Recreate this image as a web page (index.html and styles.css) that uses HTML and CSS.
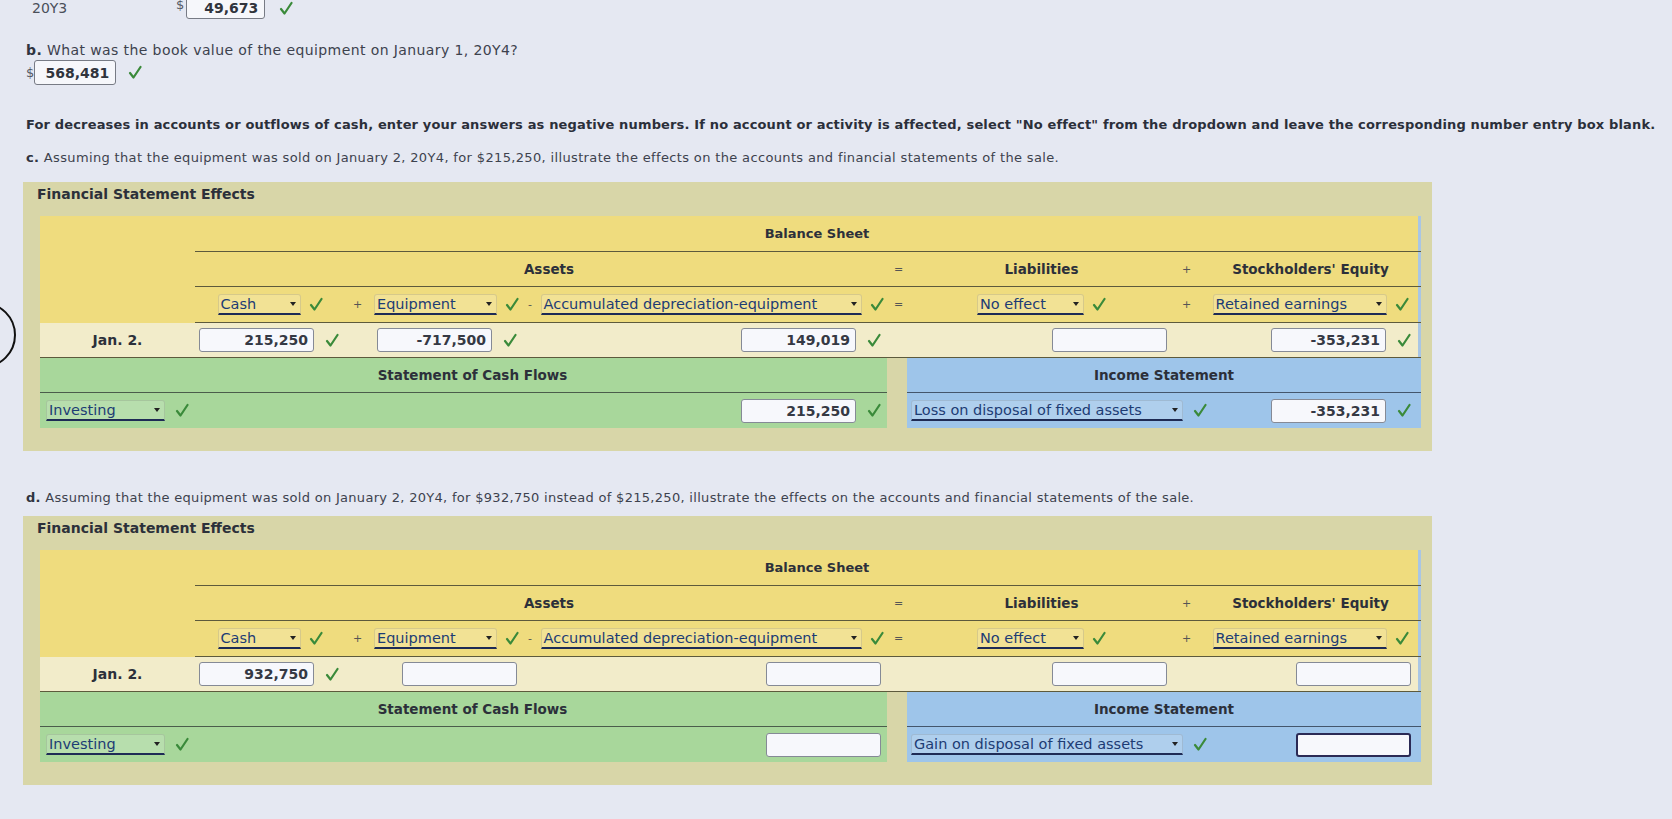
FILE: index.html
```html
<!DOCTYPE html>
<html lang="en">
<head>
<meta charset="utf-8">
<title>Financial Statement Effects</title>
<link rel="stylesheet" href="styles.css">
</head>
<body>
<div class="circle"></div>
<div class="page">
  <div class="top-row">
    <span class="yr">20Y3</span>
    <span class="dollar">$</span>
    <span class="ans w-top">49,673</span>
    <svg class="ck" viewBox="0 0 14 14"><path d="M2 7.5 L5.5 12 L12.5 1.5"/></svg>
  </div>
  <p class="q q-b"><b>b.</b> What was the book value of the equipment on January 1, 20Y4?</p>
  <div class="ans-row">
    <span class="dollar">$</span>
    <span class="ans w-b">568,481</span>
    <svg class="ck" viewBox="0 0 14 14"><path d="M2 7.5 L5.5 12 L12.5 1.5"/></svg>
  </div>
  <p class="note">For decreases in accounts or outflows of cash, enter your answers as negative numbers. If no account or activity is affected, select "No effect" from the dropdown and leave the corresponding number entry box blank.</p>
  <p class="q q-c"><b>c.</b> Assuming that the equipment was sold on January 2, 20Y4, for $215,250, illustrate the effects on the accounts and financial statements of the sale.</p>

  <section class="panel p1">
    <h2 class="ptitle">Financial Statement Effects</h2>
    <div class="tbl">
      <div class="bs grid">
        <div class="c-label"></div>
        <div class="c-bstitle">Balance Sheet</div>
        <div class="c-assets hdr">Assets</div>
        <div class="c-op hdr">=</div>
        <div class="c-liab hdr">Liabilities</div>
        <div class="c-op hdr">+</div>
        <div class="c-eq hdr">Stockholders' Equity</div>

        <div class="cell sel-cell"><span class="sel w-cash">Cash</span><svg class="ck" viewBox="0 0 14 14"><path d="M2 7.5 L5.5 12 L12.5 1.5"/></svg></div>
        <div class="c-op sel-row">+</div>
        <div class="cell sel-cell"><span class="sel w-equip">Equipment</span><svg class="ck" viewBox="0 0 14 14"><path d="M2 7.5 L5.5 12 L12.5 1.5"/></svg></div>
        <div class="c-op sel-row">-</div>
        <div class="cell sel-cell"><span class="sel w-accum">Accumulated depreciation-equipment</span><svg class="ck" viewBox="0 0 14 14"><path d="M2 7.5 L5.5 12 L12.5 1.5"/></svg></div>
        <div class="c-op sel-row">=</div>
        <div class="cell sel-cell"><span class="sel w-liab">No effect</span><svg class="ck" viewBox="0 0 14 14"><path d="M2 7.5 L5.5 12 L12.5 1.5"/></svg></div>
        <div class="c-op sel-row">+</div>
        <div class="cell sel-cell"><span class="sel w-re">Retained earnings</span><svg class="ck" viewBox="0 0 14 14"><path d="M2 7.5 L5.5 12 L12.5 1.5"/></svg></div>
      </div>
      <div class="jan grid">
        <div class="c-date">Jan. 2.</div>
        <div class="cell inp-cell"><span class="inp">215,250</span><svg class="ck" viewBox="0 0 14 14"><path d="M2 7.5 L5.5 12 L12.5 1.5"/></svg></div>
        <div></div>
        <div class="cell inp-cell"><span class="inp">-717,500</span><svg class="ck" viewBox="0 0 14 14"><path d="M2 7.5 L5.5 12 L12.5 1.5"/></svg></div>
        <div></div>
        <div class="cell inp-cell"><span class="inp">149,019</span><svg class="ck" viewBox="0 0 14 14"><path d="M2 7.5 L5.5 12 L12.5 1.5"/></svg></div>
        <div></div>
        <div class="cell inp-cell"><span class="inp"></span></div>
        <div></div>
        <div class="cell inp-cell re"><span class="inp">-353,231</span><svg class="ck" viewBox="0 0 14 14"><path d="M2 7.5 L5.5 12 L12.5 1.5"/></svg></div>
      </div>
      <div class="bottom grid">
        <div class="scf">
          <div class="sub-hdr">Statement of Cash Flows</div>
          <div class="sub-row">
            <span class="sel w-inv">Investing</span><svg class="ck" viewBox="0 0 14 14"><path d="M2 7.5 L5.5 12 L12.5 1.5"/></svg>
            <span class="spacer"></span>
            <span class="inp">215,250</span><svg class="ck" viewBox="0 0 14 14"><path d="M2 7.5 L5.5 12 L12.5 1.5"/></svg>
          </div>
        </div>
        <div class="is">
          <div class="sub-hdr">Income Statement</div>
          <div class="sub-row">
            <span class="sel w-loss">Loss on disposal of fixed assets</span><svg class="ck" viewBox="0 0 14 14"><path d="M2 7.5 L5.5 12 L12.5 1.5"/></svg>
            <span class="spacer"></span>
            <span class="inp">-353,231</span><svg class="ck" viewBox="0 0 14 14"><path d="M2 7.5 L5.5 12 L12.5 1.5"/></svg>
          </div>
        </div>
      </div>
    </div>
  </section>

  <p class="q q-d"><b>d.</b> Assuming that the equipment was sold on January 2, 20Y4, for $932,750 instead of $215,250, illustrate the effects on the accounts and financial statements of the sale.</p>

  <section class="panel p2">
    <h2 class="ptitle">Financial Statement Effects</h2>
    <div class="tbl">
      <div class="bs grid">
        <div class="c-label"></div>
        <div class="c-bstitle">Balance Sheet</div>
        <div class="c-assets hdr">Assets</div>
        <div class="c-op hdr">=</div>
        <div class="c-liab hdr">Liabilities</div>
        <div class="c-op hdr">+</div>
        <div class="c-eq hdr">Stockholders' Equity</div>

        <div class="cell sel-cell"><span class="sel w-cash">Cash</span><svg class="ck" viewBox="0 0 14 14"><path d="M2 7.5 L5.5 12 L12.5 1.5"/></svg></div>
        <div class="c-op sel-row">+</div>
        <div class="cell sel-cell"><span class="sel w-equip">Equipment</span><svg class="ck" viewBox="0 0 14 14"><path d="M2 7.5 L5.5 12 L12.5 1.5"/></svg></div>
        <div class="c-op sel-row">-</div>
        <div class="cell sel-cell"><span class="sel w-accum">Accumulated depreciation-equipment</span><svg class="ck" viewBox="0 0 14 14"><path d="M2 7.5 L5.5 12 L12.5 1.5"/></svg></div>
        <div class="c-op sel-row">=</div>
        <div class="cell sel-cell"><span class="sel w-liab">No effect</span><svg class="ck" viewBox="0 0 14 14"><path d="M2 7.5 L5.5 12 L12.5 1.5"/></svg></div>
        <div class="c-op sel-row">+</div>
        <div class="cell sel-cell"><span class="sel w-re">Retained earnings</span><svg class="ck" viewBox="0 0 14 14"><path d="M2 7.5 L5.5 12 L12.5 1.5"/></svg></div>
      </div>
      <div class="jan grid">
        <div class="c-date">Jan. 2.</div>
        <div class="cell inp-cell"><span class="inp">932,750</span><svg class="ck" viewBox="0 0 14 14"><path d="M2 7.5 L5.5 12 L12.5 1.5"/></svg></div>
        <div></div>
        <div class="cell inp-cell"><span class="inp"></span></div>
        <div></div>
        <div class="cell inp-cell"><span class="inp"></span></div>
        <div></div>
        <div class="cell inp-cell"><span class="inp"></span></div>
        <div></div>
        <div class="cell inp-cell re"><span class="inp"></span></div>
      </div>
      <div class="bottom grid">
        <div class="scf">
          <div class="sub-hdr">Statement of Cash Flows</div>
          <div class="sub-row">
            <span class="sel w-inv">Investing</span><svg class="ck" viewBox="0 0 14 14"><path d="M2 7.5 L5.5 12 L12.5 1.5"/></svg>
            <span class="spacer"></span>
            <span class="inp"></span>
          </div>
        </div>
        <div class="is">
          <div class="sub-hdr">Income Statement</div>
          <div class="sub-row">
            <span class="sel w-loss">Gain on disposal of fixed assets</span><svg class="ck" viewBox="0 0 14 14"><path d="M2 7.5 L5.5 12 L12.5 1.5"/></svg>
            <span class="spacer"></span>
            <span class="inp focus"></span>
          </div>
        </div>
      </div>
    </div>
  </section>
</div>
</body>
</html>
```

FILE: styles.css
```css
* { box-sizing: border-box; }

body {
  margin: 0;
  background: #e5e8f2;
  font-family: "DejaVu Sans", Verdana, sans-serif;
  font-size: 13px;
  color: #3a3f4b;
  overflow: hidden;
}

.page {
  padding-left: 26px;
}

.circle {
  position: absolute;
  left: -50px;
  top: 302px;
  width: 66px;
  height: 66px;
  border: 2px solid #111;
  border-radius: 50%;
}

/* answer rows */
.top-row {
  display: flex;
  align-items: center;
  height: 22px;
  margin-top: -3px;
}
.yr {
  margin-left: 6px;
  width: 144px;
  font-size: 14px;
  color: #4a4f5a;
}
.dollar {
  color: #555a66;
  font-size: 13px;
  align-self: flex-start;
  margin-right: 2px;
}
.ans {
  display: inline-flex;
  align-items: center;
  justify-content: flex-end;
  height: 22px;
  padding-right: 6px;
  background: #f6f7fb;
  border: 1px solid #777b85;
  border-radius: 3px;
  font-weight: bold;
  font-size: 14px;
  color: #30343d;
}
.w-top { width: 79px; }
.w-b { width: 82px; height: 25px; }

.ck {
  width: 14px;
  height: 15px;
  flex: none;
  margin-left: 12px;
}
.ck path {
  fill: none;
  stroke: #3a8a3a;
  stroke-width: 2.2;
  stroke-linecap: round;
  stroke-linejoin: round;
}
.top-row .ck { margin-left: 14px; }
.ans-row .ck { margin-left: 12px; }

.q {
  margin: 0;
  line-height: 16px;
  white-space: nowrap;
  color: #3d424e;
}
.q b { color: #2f3440; }
.q-b { margin-top: 23px; font-size: 14px; letter-spacing: 0.4px; }
.q-c { margin-top: 17px; font-size: 13px; letter-spacing: 0.35px; }
.q-d { margin-top: 39px; font-size: 13px; letter-spacing: 0.3px; }

.ans-row {
  display: flex;
  align-items: center;
  height: 25px;
  margin-top: 2px;
}
.ans-row .dollar { margin-right: 0; align-self: center; }

.note {
  margin: 32px 0 0;
  line-height: 16px;
  font-weight: bold;
  white-space: nowrap;
  color: #2b2f3a;
  letter-spacing: 0.15px;
}

/* panels */
.panel {
  margin-left: -3px;
  width: 1409px;
  height: 269px;
  background: #d8d6a8;
  padding: 3px 11px 0 17px;
}
.p1 { margin-top: 16px; }
.p2 { margin-top: 10px; }

.ptitle {
  margin: 0 0 13px -3px;
  font-size: 14px;
  line-height: 18px;
  color: #2c303a;
}

.tbl {
  width: 1381px;
  color: #2c303a;
}

.grid {
  display: grid;
  grid-template-columns: 155px 150px 25px 153px 14px 350px 23px 263px 27px 221px;
}

.bs {
  background: #efdc7e;
  grid-template-rows: 36px 35px 36px;
  box-shadow: inset -3px 0 0 #a9c6e4;
}
.c-label { grid-row: 1 / 4; }
.c-bstitle {
  grid-column: 2 / 11;
  border-bottom: 1px solid #5d5a3c;
  display: flex;
  align-items: center;
  justify-content: center;
  font-weight: bold;
  font-size: 13px;
  padding-left: 18px;
}
.hdr {
  display: flex;
  align-items: center;
  justify-content: center;
  font-weight: bold;
  font-size: 13.5px;
  border-bottom: 1px solid #5d5a3c;
}
.c-assets { grid-column: 2 / 7; padding-left: 16px; }
.c-op {
  font-weight: normal;
  font-size: 11px;
  color: #555;
  display: flex;
  align-items: center;
  justify-content: center;
}
.c-op.hdr { font-weight: normal; font-size: 11px; }
.sel-row { border-bottom: 1px solid #5d5a3c; }
.cell {
  display: flex;
  align-items: center;
}
.sel-cell {
  justify-content: center;
  border-bottom: 1px solid #5d5a3c;
}
.sel-cell .ck { margin-left: 8px; }

.sel {
  position: relative;
  display: inline-flex;
  align-items: center;
  height: 21px;
  padding: 0 14px 0 2px;
  font-size: 14.5px;
  color: #1d3c74;
  background: rgba(255, 255, 255, 0.18);
  border: 1px solid rgba(90, 90, 90, 0.18);
  border-bottom: 2px solid #1e2b55;
  border-radius: 3px 3px 0 0;
  white-space: nowrap;
  overflow: hidden;
}
.sel::after {
  content: "";
  position: absolute;
  right: 4px;
  top: 7px;
  border-left: 3.5px solid transparent;
  border-right: 3.5px solid transparent;
  border-top: 4px solid #222;
}
.w-cash { width: 83px; }
.w-equip { width: 123px; }
.w-accum { width: 321px; }
.w-liab { width: 107px; }
.w-re { width: 174px; }
.w-inv { width: 119px; }
.w-loss { width: 272px; }

.jan {
  background: #f2ecca;
  grid-template-rows: 34px;
  border-bottom: 1px solid #5d5a3c;
  box-shadow: inset -3px 0 0 #a9c6e4;
}
.c-date {
  display: flex;
  align-items: center;
  justify-content: center;
  font-weight: bold;
  font-size: 14px;
}
.inp-cell {
  justify-content: flex-end;
  padding-right: 6px;
}
.inp-cell.re { padding-right: 10px; }
.inp-cell .ck { margin-left: 11px; }

.inp {
  display: inline-flex;
  align-items: center;
  justify-content: flex-end;
  width: 115px;
  height: 24px;
  padding-right: 5px;
  background: #f7f8fc;
  border: 1px solid #858a96;
  border-radius: 3px;
  font-weight: bold;
  font-size: 14px;
  color: #353944;
  flex: none;
}
.inp.focus { border: 2px solid #2b2a55; }

.bottom {
  grid-template-rows: 70px;
}
.scf {
  grid-column: 1 / 7;
  background: #a8d79b;
}
.is {
  grid-column: 8 / 11;
  margin-left: -3px;
  background: #9ec5ea;
}
.sub-hdr {
  height: 35px;
  display: flex;
  align-items: center;
  justify-content: center;
  font-weight: bold;
  font-size: 13.5px;
  border-bottom: 1px solid #4b5d4b;
}
.scf .sub-hdr { padding-left: 18px; }
.is .sub-hdr { border-bottom-color: #44566c; }
.sub-row {
  height: 35px;
  display: flex;
  align-items: center;
  padding: 0 6px;
}
.scf .sub-row .sel + .ck { margin-left: 10px; }
.is .sub-row { padding: 0 10px 0 4px; }
.is .sub-row .sel + .ck { margin-left: 10px; }
.sub-row .inp + .ck { margin-left: 11px; }
.spacer { flex: 1; }
```
